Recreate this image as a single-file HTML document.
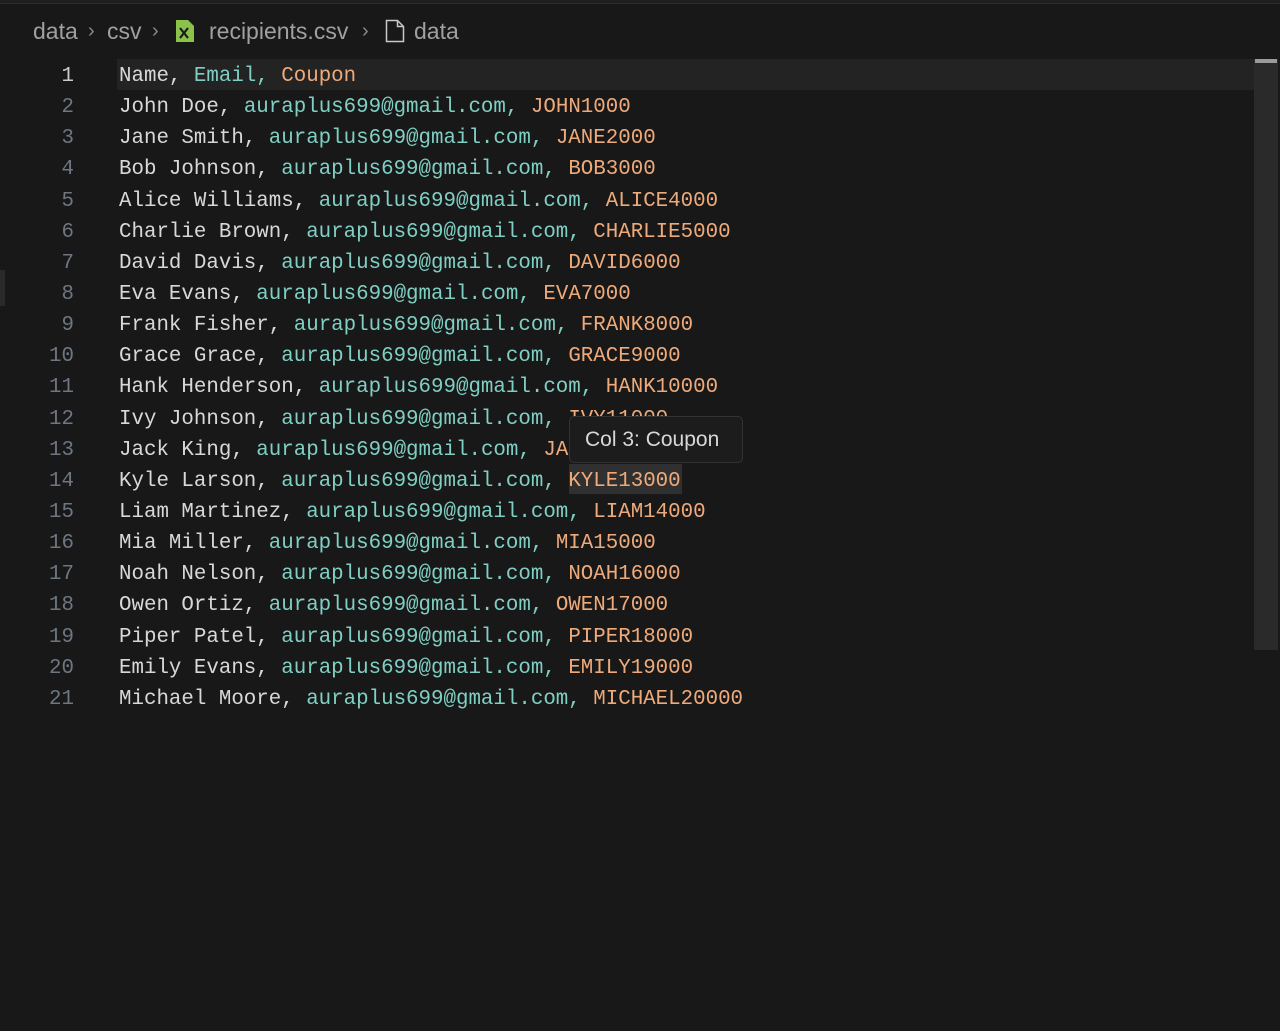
<!DOCTYPE html>
<html><head><style>
body{margin:0;width:1280px;height:1031px;background:#181818;overflow:hidden;position:relative;font-family:"Liberation Sans",sans-serif}
.top{position:absolute;top:0;left:0;width:1280px;height:3px;background:#1f1f1f;border-bottom:1px solid #2b2b2b}
.bc span,.bc svg{position:absolute;top:17px;color:#a0a0a0;font-size:23px;line-height:28px;white-space:nowrap}
.bc .sep{color:#8a8a8a;font-size:20px}
.code{position:absolute;top:61px;left:0;font-family:"Liberation Mono",monospace;font-size:20.8px}
.l{height:31.15px;line-height:31px;position:relative;white-space:pre}
.n{position:absolute;left:0;width:74px;text-align:right;color:#6e7681}
.t{position:absolute;left:119px;color:#d8d8d8}
.e{color:#7fcfc4}.c{color:#eeaa7a}
.cur{position:absolute;left:117px;top:59px;width:1140px;height:31px;background:#232323}
.sb{position:absolute;left:1254px;top:59px;width:24px;height:591px;background:#2a2a2a}
.sbt{position:absolute;left:1255px;top:59px;width:22px;height:4px;background:#9a9a9a}
.tip{position:absolute;left:569px;top:416px;width:174px;height:47px;background:#1c1c1c;border:1px solid #333;border-radius:5px;color:#d8d8d8;font-size:21px;line-height:45px;padding-left:15px;box-sizing:border-box}
.hl{position:absolute;left:569px;top:464px;width:113px;height:30px;background:#303030}
</style></head><body>
<div class="top"></div>
<div class="bc">
<span style="left:33px">data</span><span class="sep" style="left:88px">›</span>
<span style="left:107px">csv</span><span class="sep" style="left:152px">›</span>
<svg style="left:175px;top:19px" width="20" height="24" viewBox="0 0 20 24"><path d="M1 1h12l6 6v16H1z" fill="#8bc34a"/><path d="M5 9l8 10M13 9l-8 10" stroke="#1a1a1a" stroke-width="2.2"/></svg>
<span style="left:209px">recipients.csv</span><span class="sep" style="left:362px">›</span>
<svg style="left:385px;top:19px" width="20" height="24" viewBox="0 0 20 24"><path d="M1.5 1.5h11l6 6v15h-17z M12.5 1.5v6h6" fill="none" stroke="#c8c8c8" stroke-width="1.5"/></svg>
<span style="left:414px">data</span></div>
<div class="cur"></div>
<div class="hl"></div>
<div class="code">
<div class="l"><span class="n" style="color:#ccc">1</span><span class="t">Name, <span class="e">Email,</span> <span class="c">Coupon</span></span></div>
<div class="l"><span class="n">2</span><span class="t">John Doe, <span class="e">auraplus699@gmail.com,</span> <span class="c">JOHN1000</span></span></div>
<div class="l"><span class="n">3</span><span class="t">Jane Smith, <span class="e">auraplus699@gmail.com,</span> <span class="c">JANE2000</span></span></div>
<div class="l"><span class="n">4</span><span class="t">Bob Johnson, <span class="e">auraplus699@gmail.com,</span> <span class="c">BOB3000</span></span></div>
<div class="l"><span class="n">5</span><span class="t">Alice Williams, <span class="e">auraplus699@gmail.com,</span> <span class="c">ALICE4000</span></span></div>
<div class="l"><span class="n">6</span><span class="t">Charlie Brown, <span class="e">auraplus699@gmail.com,</span> <span class="c">CHARLIE5000</span></span></div>
<div class="l"><span class="n">7</span><span class="t">David Davis, <span class="e">auraplus699@gmail.com,</span> <span class="c">DAVID6000</span></span></div>
<div class="l"><span class="n">8</span><span class="t">Eva Evans, <span class="e">auraplus699@gmail.com,</span> <span class="c">EVA7000</span></span></div>
<div class="l"><span class="n">9</span><span class="t">Frank Fisher, <span class="e">auraplus699@gmail.com,</span> <span class="c">FRANK8000</span></span></div>
<div class="l"><span class="n">10</span><span class="t">Grace Grace, <span class="e">auraplus699@gmail.com,</span> <span class="c">GRACE9000</span></span></div>
<div class="l"><span class="n">11</span><span class="t">Hank Henderson, <span class="e">auraplus699@gmail.com,</span> <span class="c">HANK10000</span></span></div>
<div class="l"><span class="n">12</span><span class="t">Ivy Johnson, <span class="e">auraplus699@gmail.com,</span> <span class="c">IVY11000</span></span></div>
<div class="l"><span class="n">13</span><span class="t">Jack King, <span class="e">auraplus699@gmail.com,</span> <span class="c">JACK12000</span></span></div>
<div class="l"><span class="n">14</span><span class="t">Kyle Larson, <span class="e">auraplus699@gmail.com,</span> <span class="c">KYLE13000</span></span></div>
<div class="l"><span class="n">15</span><span class="t">Liam Martinez, <span class="e">auraplus699@gmail.com,</span> <span class="c">LIAM14000</span></span></div>
<div class="l"><span class="n">16</span><span class="t">Mia Miller, <span class="e">auraplus699@gmail.com,</span> <span class="c">MIA15000</span></span></div>
<div class="l"><span class="n">17</span><span class="t">Noah Nelson, <span class="e">auraplus699@gmail.com,</span> <span class="c">NOAH16000</span></span></div>
<div class="l"><span class="n">18</span><span class="t">Owen Ortiz, <span class="e">auraplus699@gmail.com,</span> <span class="c">OWEN17000</span></span></div>
<div class="l"><span class="n">19</span><span class="t">Piper Patel, <span class="e">auraplus699@gmail.com,</span> <span class="c">PIPER18000</span></span></div>
<div class="l"><span class="n">20</span><span class="t">Emily Evans, <span class="e">auraplus699@gmail.com,</span> <span class="c">EMILY19000</span></span></div>
<div class="l"><span class="n">21</span><span class="t">Michael Moore, <span class="e">auraplus699@gmail.com,</span> <span class="c">MICHAEL20000</span></span></div>
</div>
<div class="tip">Col 3: Coupon</div>
<div class="sb"></div><div class="sbt"></div>
<div style="position:absolute;left:0;top:270px;width:5px;height:36px;background:#2a2a2a"></div>
</body></html>
